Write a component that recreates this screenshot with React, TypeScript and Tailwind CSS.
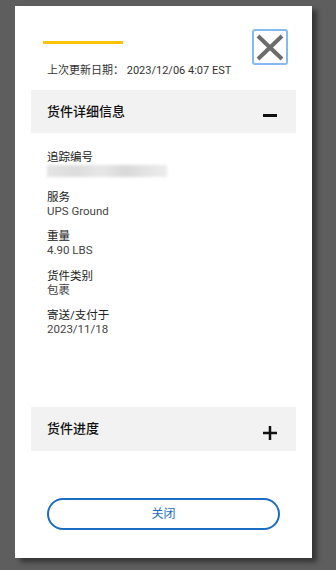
import React from "react";

const font = { fontFamily: 'Roboto, "Noto Sans CJK SC", sans-serif' };

function Item({ label, value, blurred }: { label: string; value?: string; blurred?: boolean }) {
  return (
    <div className="flex flex-col">
      <div className="text-[11.5px] leading-[14px] text-[#222]">{label}</div>
      {blurred ? (
        <div className="h-[14px] flex items-center">
          <div className="h-[12px] w-[120px] blur-[1.5px] bg-[linear-gradient(90deg,#e4e4e4_0%,#dcdcdc_25%,#e8e8e8_45%,#d8d8d8_65%,#e2e2e2_80%,#ececec_100%)]" />
        </div>
      ) : (
        <div className="text-[11.5px] leading-[14px] text-[#444]">{value}</div>
      )}
    </div>
  );
}

export default function App() {
  return (
    <div className="w-[336px] h-[570px] bg-[#5e5e5e] pt-[6px] pl-[15px]" style={font}>
      <div className="w-[297px] h-[552px] bg-white shadow-[5px_4px_5px_rgba(0,0,0,0.45)] flex flex-col px-[16px]">
        <div className="flex justify-between items-start mt-[23px] pl-[12px] pr-[8px]">
          <div className="mt-[12px] h-[2.5px] w-[80px] bg-[#fcc30b]" />
          <button className="w-[36px] h-[36px] border-2 border-[#86b8f3] rounded-[3px] flex items-center justify-center">
            <svg width="28" height="27" viewBox="0 0 28 27">
              <path d="M2 2 L26 25 M26 2 L2 25" stroke="#6b6b6b" strokeWidth="4" strokeLinecap="butt" />
            </svg>
          </button>
        </div>
        <div className="pl-[16px] text-[11px] leading-[12px] text-[#333]">上次更新日期：&nbsp;2023/12/06 4:07 EST</div>

        <div className="mt-[13px] h-[43px] bg-[#f2f2f2] flex justify-between items-center pl-[16px] pr-[19px]">
          <div className="text-[13px] font-medium text-[#111]">货件详细信息</div>
          <div className="mt-[8px] w-[14px] h-[2.5px] bg-[#111]" />
        </div>

        <div className="pl-[16px] pt-[17px] flex flex-col gap-[11.5px]">
          <Item label="追踪编号" blurred />
          <Item label="服务" value="UPS Ground" />
          <Item label="重量" value="4.90 LBS" />
          <Item label="货件类别" value="包裹" />
          <Item label="寄送/支付于" value="2023/11/18" />
        </div>

        <div className="mt-[71px] h-[44px] bg-[#f2f2f2] flex justify-between items-center pl-[16px] pr-[19px]">
          <div className="text-[13px] font-medium text-[#111]">货件进度</div>
          <svg className="mt-[8px]" width="14" height="14" viewBox="0 0 14 14">
            <path d="M0 7 H14 M7 0 V14" stroke="#111" strokeWidth="2.5" />
          </svg>
        </div>

        <div className="mt-[47px] px-[16px]">
          <button className="w-full h-[32px] rounded-full border-2 border-[#1a6dc2] text-[12px] text-[#1a6dc2] flex items-center justify-center">
            关闭
          </button>
        </div>
      </div>
    </div>
  );
}
